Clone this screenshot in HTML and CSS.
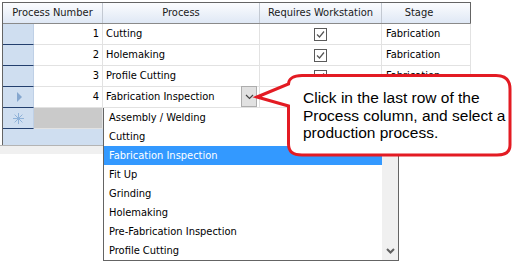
FILE: index.html
```html
<!DOCTYPE html>
<html lang="en">
<head>
  <meta charset="UTF-8">
  <title>Processes</title>
  <link rel="stylesheet" href="styles.css">
</head>
<body>
  <div class="screen">
    <div class="grid">
      <div class="head">
        <div class="hcell first">Process Number</div>
        <div class="hcell w-proc">Process</div>
        <div class="hcell w-req">Requires Workstation</div>
        <div class="hcell w-stage stage-head">Stage</div>
      </div>
      <div class="row">
        <div class="rowhead"></div>
        <div class="cell w-num num">1</div>
        <div class="cell w-proc">Cutting</div>
        <div class="cell w-req check-cell"><span class="check"><svg width="11" height="11" viewBox="0 0 11 11"><path d="M2 5.5 L4.5 8 L9 2.5" fill="none" stroke="#555" stroke-width="1.2"/></svg></span></div>
        <div class="cell w-stage">Fabrication</div>
      </div>
      <div class="row">
        <div class="rowhead"></div>
        <div class="cell w-num num">2</div>
        <div class="cell w-proc">Holemaking</div>
        <div class="cell w-req check-cell"><span class="check"><svg width="11" height="11" viewBox="0 0 11 11"><path d="M2 5.5 L4.5 8 L9 2.5" fill="none" stroke="#555" stroke-width="1.2"/></svg></span></div>
        <div class="cell w-stage">Fabrication</div>
      </div>
      <div class="row">
        <div class="rowhead"></div>
        <div class="cell w-num num">3</div>
        <div class="cell w-proc">Profile Cutting</div>
        <div class="cell w-req check-cell"><span class="check"><svg width="11" height="11" viewBox="0 0 11 11"><path d="M2 5.5 L4.5 8 L9 2.5" fill="none" stroke="#555" stroke-width="1.2"/></svg></span></div>
        <div class="cell w-stage">Fabrication</div>
      </div>
      <div class="row">
        <div class="rowhead"><span class="current"></span></div>
        <div class="cell w-num num">4</div>
        <div class="cell w-proc combo">
          <span>Fabrication Inspection</span>
          <span class="combo-btn"><svg width="9" height="6" viewBox="0 0 9 6"><path d="M1 1 L4.5 4.5 L8 1" fill="none" stroke="#444" stroke-width="1.2"/></svg></span>
        </div>
        <div class="cell w-req"></div>
        <div class="cell w-stage"></div>
      </div>
      <div class="row">
        <div class="rowhead"><svg class="star" width="11" height="11" viewBox="0 0 11 11"><path d="M5.5 0 V11 M0 5.5 H11 M1.6 1.6 L9.4 9.4 M9.4 1.6 L1.6 9.4" stroke="#8fb2d9" stroke-width="1"/></svg></div>
        <div class="cell w-num new"></div>
        <div class="cell w-proc"></div>
        <div class="cell w-req"></div>
        <div class="cell w-stage"></div>
      </div>
    </div>
    <div class="strip"></div>

    <div class="list">
      <div class="items">
        <div class="item">Assembly / Welding</div>
        <div class="item">Cutting</div>
        <div class="item selected">Fabrication Inspection</div>
        <div class="item">Fit Up</div>
        <div class="item">Grinding</div>
        <div class="item">Holemaking</div>
        <div class="item">Pre-Fabrication Inspection</div>
        <div class="item">Profile Cutting</div>
      </div>
      <div class="scroll">
        <svg width="9" height="6" viewBox="0 0 9 6"><path d="M1 1 L4.5 4.5 L8 1" fill="none" stroke="#606060" stroke-width="2"/></svg>
      </div>
    </div>

    <div class="callout">
      <svg class="bubble" width="264" height="96" viewBox="0 0 264 96">
        <path d="M7 31 L38.5 18 C38.5 13 43 9.5 52 9.5 L246 9.5 C255 9.5 260 14 260 23 L260 79 C260 86 255 89 247 89 L52 89 C43 89 38.5 86 38.5 78 L38.5 40 Z" fill="#fff" stroke="#e31b23" stroke-width="3"/>
      </svg>
      <div class="callout-text">Click in the last row of the<br>Process column, and select a<br>production process.</div>
    </div>
  </div>
</body>
</html>
```

FILE: styles.css
```css
body {
  margin: 0;
  background-color: #fff;
}
.screen {
  position: relative;
  width: 514px;
  height: 264px;
  overflow: hidden;
  font-family: "DejaVu Sans Condensed", "DejaVu Sans", sans-serif;
  font-stretch: condensed;
  font-size: 11px;
  color: #000;
}
.grid {
  margin: 2px 0 0 2px;
  width: 469px;
  height: 143px;
  border-left: 1px solid #646464;
  border-top: 1px solid #646464;
  background-color: #cfdef0;
  box-sizing: border-box;
}
.head {
  display: flex;
  height: 21px;
  border-bottom: 1px solid #8a8a8a;
  box-sizing: border-box;
  background: linear-gradient(#fbfcfe, #dfe8f5);
}
.hcell {
  line-height: 20px;
  text-align: center;
  color: #1a1a1a;
  border-right: 1px solid #c3c9d2;
  box-sizing: border-box;
}
.hcell.first { width: 100px; }
.stage-head {
  border-right-color: #646464;
  padding-right: 14px;
}
.w-num { width: 69px; }
.w-proc { width: 157px; }
.w-req { width: 122px; }
.w-stage { width: 89px; }
.row {
  display: flex;
  height: 21px;
}
.rowhead {
  width: 31px;
  border-right: 1px solid #bfd0e6;
  border-bottom: 1px solid #233f6e;
  box-sizing: border-box;
  display: flex;
  align-items: center;
  justify-content: center;
}
.cell {
  background-color: #fff;
  border-right: 1px solid #e2e2e2;
  border-bottom: 1px solid #e2e2e2;
  box-sizing: border-box;
  line-height: 20px;
  padding-left: 3px;
  white-space: nowrap;
  overflow: hidden;
}
.cell.w-stage { padding-left: 4px; }
.num {
  text-align: right;
  padding: 0 3px 0 0;
}
.new { background-color: #cacaca; }
.check-cell {
  display: flex;
  align-items: center;
  justify-content: center;
  padding: 0;
}
.check {
  width: 13px;
  height: 13px;
  border: 1px solid #5a5a5a;
  box-sizing: border-box;
  display: flex;
  align-items: center;
  justify-content: center;
  background-color: #fff;
}
.combo {
  display: flex;
  justify-content: space-between;
  overflow: visible;
}
.combo-btn {
  width: 16px;
  height: 21px;
  margin: -1px 2px 0 0;
  border: 1px solid #adadad;
  background-color: #e1e1e1;
  box-sizing: border-box;
  display: flex;
  align-items: center;
  justify-content: center;
}
.current {
  width: 0;
  height: 0;
  border-left: 5px solid #86a7cf;
  border-top: 5px solid transparent;
  border-bottom: 5px solid transparent;
  margin-left: 2px;
}
.strip {
  height: 8px;
  border-top: 1px solid #b4b4b4;
  background-color: #f0f0f0;
  width: 472px;
}
.list {
  position: absolute;
  left: 103px;
  top: 108px;
  width: 296px;
  height: 153px;
  display: flex;
  background-color: #fff;
  border: 1px solid #646464;
  border-top: none;
  box-sizing: border-box;
}
.items { flex: 1; }
.item {
  height: 19px;
  line-height: 19px;
  padding-left: 5px;
  white-space: nowrap;
}
.item.selected {
  background-color: #3399ff;
  color: #fff;
}
.scroll {
  width: 16px;
  background-color: #f0f0f0;
  display: flex;
  align-items: flex-end;
  justify-content: center;
  padding-bottom: 6px;
  box-sizing: border-box;
}
.callout {
  position: absolute;
  left: 250px;
  top: 66px;
  width: 264px;
  height: 96px;
}
.bubble {
  position: absolute;
  left: 0;
  top: 0;
}
.callout-text {
  position: relative;
  padding: 23px 0 0 53px;
  font-family: "Liberation Sans", Arial, sans-serif;
  font-stretch: normal;
  font-size: 15.5px;
  line-height: 17.5px;
  color: #000;
}
```
